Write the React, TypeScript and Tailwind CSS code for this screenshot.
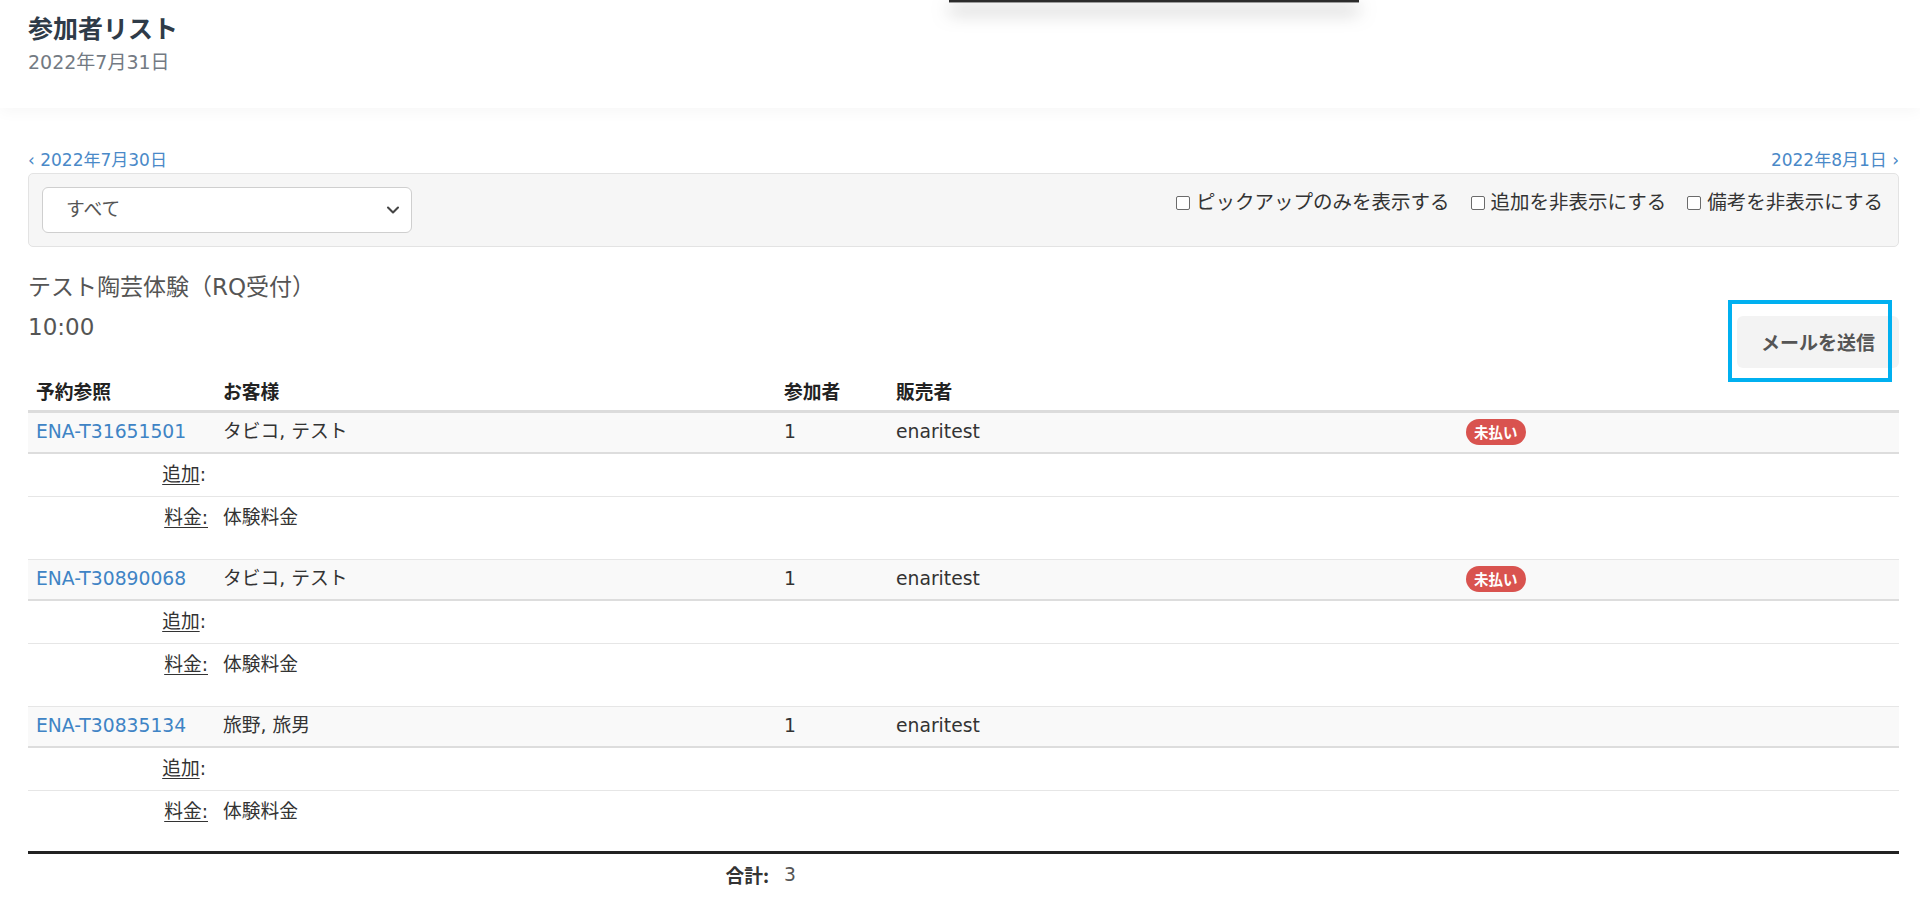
import { ChevronDown } from 'lucide-react';

interface Booking {
  ref: string;
  customer: string;
  pax: number;
  seller: string;
  unpaid: boolean;
}

const bookings: Booking[] = [
  { ref: 'ENA-T31651501', customer: 'タビコ, テスト', pax: 1, seller: 'enaritest', unpaid: true },
  { ref: 'ENA-T30890068', customer: 'タビコ, テスト', pax: 1, seller: 'enaritest', unpaid: true },
  { ref: 'ENA-T30835134', customer: '旅野, 旅男', pax: 1, seller: 'enaritest', unpaid: false },
];

const cols = 'grid grid-cols-[187px_561px_112px_570px_1fr]';

const Check = ({ label }: { label: string }) => (
  <label className="flex items-center gap-[6px]">
    <input
      type="checkbox"
      className="appearance-none w-[14px] h-[14px] border border-[#6b6b6b] rounded-[2px] bg-white"
    />
    <span>{label}</span>
  </label>
);

const App = () => {
  return (
    <div className="relative min-h-screen bg-white text-[#333] font-['DejaVu_Sans','Noto_Sans_CJK_JP',sans-serif]">
      {/* popover edge peeking in at the top */}
      <div className="absolute left-[949px] top-0 w-[410px] h-[3px] bg-[#2b2b2b] border-b border-[#9a9a9a] shadow-[0_8px_18px_rgba(0,0,0,0.55)] z-10" />

      {/* Header */}
      <header className="h-[108px] px-[28px] bg-white shadow-[0_4px_14px_rgba(0,0,0,0.035)]">
        <h1 className="pt-[10px] text-[25px] leading-[34px] font-bold text-[#2f3b48] font-['Noto_Sans_CJK_JP',sans-serif]">
          参加者リスト
        </h1>
        <p className="mt-[4px] text-[19px] leading-[28px] text-[#737a83]">2022年7月31日</p>
      </header>

      <main className="pl-[28px] pr-[21px]">
        {/* Date navigation */}
        <div className="pt-[41px] mb-[2px] flex justify-between text-[17px] leading-[22px] text-[#4a89c8]">
          <span>‹ 2022年7月30日</span>
          <span>2022年8月1日 ›</span>
        </div>

        {/* Filter well */}
        <div className="h-[74px] p-[13px] pr-[15px] bg-[#f6f6f6] border border-[#e3e3e3] rounded-[5px] flex justify-between items-start">
          <div className="relative w-[370px] h-[46px]">
            <select className="appearance-none w-full h-full bg-white border border-[#cfcfcf] rounded-[6px] pl-[23px] text-[18.75px] text-[#555] outline-none">
              <option>すべて</option>
            </select>
            <ChevronDown
              size={20}
              strokeWidth={2.5}
              className="absolute right-[9px] top-[13px] text-[#444] pointer-events-none"
            />
          </div>
          <div className="pt-[3px] flex items-center gap-[21px] text-[19.5px] leading-[26px]">
            <Check label="ピックアップのみを表示する" />
            <Check label="追加を非表示にする" />
            <Check label="備考を非表示にする" />
          </div>
        </div>

        {/* Tour heading */}
        <h2 className="mt-[24px] text-[23px] leading-[32px] text-[#555]">テスト陶芸体験（RQ受付）</h2>
        <div className="flex justify-between items-start h-[67px]">
          <span className="mt-[8px] text-[23px] leading-[32px] text-[#555]">10:00</span>
          <div className="relative mt-[13px]">
            <button className="w-[162px] h-[52px] bg-[#f3f3f3] rounded-[6px] text-[19px] font-bold text-[#555] font-['Noto_Sans_CJK_JP',sans-serif]">
              メールを送信
            </button>
            {/* highlight annotation */}
            <div className="absolute -left-[9px] -top-[16px] w-[164px] h-[82px] border-4 border-[#00b0f0] pointer-events-none" />
          </div>
        </div>

        {/* Table */}
        <div className="mt-[2px]">
          <div className={`${cols} h-[41px] items-center border-b-[3px] border-[#dcdcdc] text-[18.75px] font-bold text-[#222] font-['Noto_Sans_CJK_JP',sans-serif]`}>
            <div className="pl-[8px]">予約参照</div>
            <div className="pl-[8px]">お客様</div>
            <div className="pl-[8px]">参加者</div>
            <div className="pl-[8px]">販売者</div>
            <div />
          </div>

          {bookings.map((b, i) => {
            const last = i === bookings.length - 1;
            return (
              <div key={b.ref} className="text-[18.75px]">
                <div className={`${cols} h-[41px] items-center bg-[#f9f9f9] border-b-2 border-[#dddddd]`}>
                  <div className="pl-[8px] text-[#3f84c5]">{b.ref}</div>
                  <div className="pl-[8px]">{b.customer}</div>
                  <div className="pl-[8px]">{b.pax}</div>
                  <div className="pl-[8px]">{b.seller}</div>
                  <div className="pl-[8px]">
                    {b.unpaid && (
                      <span className="inline-flex items-center h-[26px] px-[8px] rounded-full bg-[#d9534f] text-white text-[14.5px] font-bold font-['Noto_Sans_CJK_JP',sans-serif]">
                        未払い
                      </span>
                    )}
                  </div>
                </div>
                <div className={`${cols} h-[43px] items-center border-b border-[#e6e6e6]`}>
                  <div className="pr-[9px] text-right">
                    <span className="underline underline-offset-[3px]">追加</span>:
                  </div>
                  <div />
                </div>
                <div
                  className={`${cols} items-start pt-[7px] ${
                    last ? 'h-[60px]' : 'h-[63px] border-b border-[#e6e6e6]'
                  }`}
                >
                  <div className="pr-[7px] text-right">
                    <span className="underline underline-offset-[3px]">料金:</span>
                  </div>
                  <div className="pl-[8px]">体験料金</div>
                </div>
              </div>
            );
          })}

          <div className="border-t-[3px] border-[#222]" />
          <div className={`${cols} mt-[8px] text-[18.75px] leading-[26px]`}>
            <div />
            <div className="pr-[7px] text-right font-bold font-['Noto_Sans_CJK_JP',sans-serif]">合計:</div>
            <div className="pl-[8px] text-[#555]">3</div>
          </div>
        </div>
      </main>
    </div>
  );
};

export default App;
